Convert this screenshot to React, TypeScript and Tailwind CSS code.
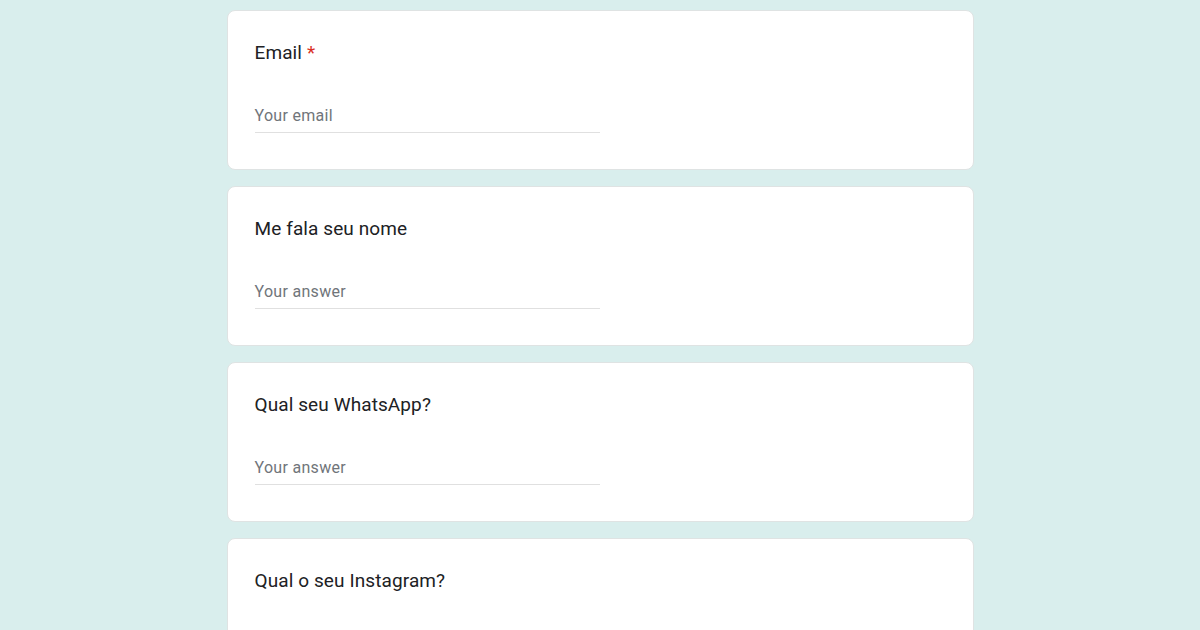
import React from "react";

const Card = ({ title, required, placeholder }: { title: string; required?: boolean; placeholder?: string }) => (
  <div className="w-[747px] h-[160px] shrink-0 bg-white rounded-[8px] border border-[#dfe3e3] pl-[27px] pt-[30px] box-border">
    <div className="text-[19px] leading-[24px] text-[#202124] tracking-[0.1px]" style={{ fontFamily: "Roboto, 'Noto Sans', sans-serif" }}>
      {title}
      {required && <span className="text-[#d93025] ml-[5px]">*</span>}
    </div>
    {placeholder && (
      <div className="mt-[39px] w-[345px] border-b border-[#e0e0e0] pb-[4px]">
        <div className="text-[16px] leading-[24px] text-[#70757a] tracking-[0.3px]" style={{ fontFamily: "Roboto, sans-serif" }}>
          {placeholder}
        </div>
      </div>
    )}
  </div>
);

export default function App() {
  return (
    <div className="w-[1200px] h-[630px] overflow-hidden bg-[#d9eeed] flex flex-col items-center pt-[10px] gap-[16px]">
      <Card title="Email" required placeholder="Your email" />
      <Card title="Me fala seu nome" placeholder="Your answer" />
      <Card title="Qual seu WhatsApp?" placeholder="Your answer" />
      <Card title="Qual o seu Instagram?" />
    </div>
  );
}
